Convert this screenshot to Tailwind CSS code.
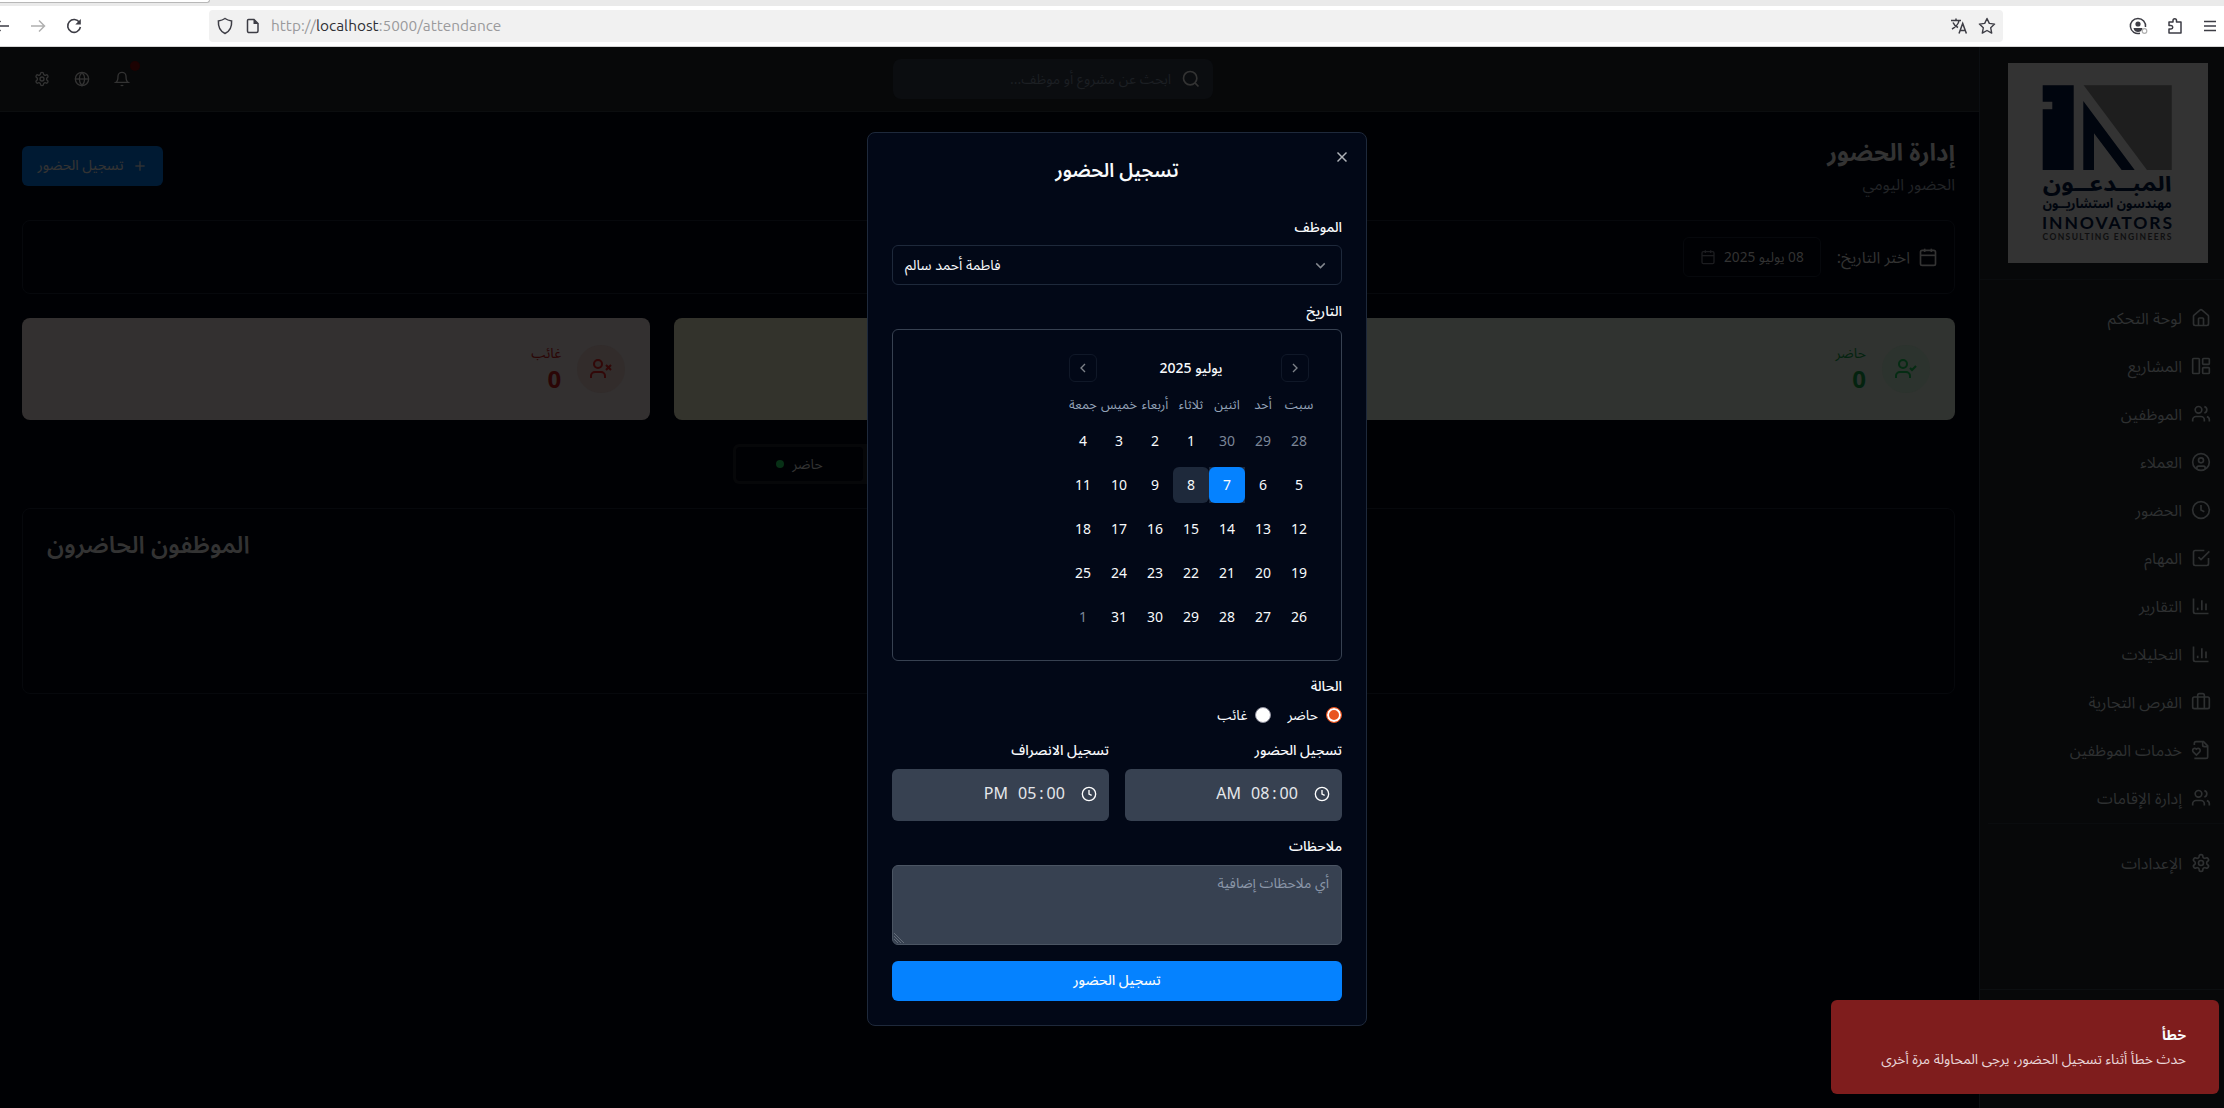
<!DOCTYPE html>
<html lang="ar">
<head>
<meta charset="utf-8">
<title>Attendance</title>
<script src="https://cdn.jsdelivr.net/npm/@tailwindcss/browser@4"></script>
</head>
<body class="h-[1108px] w-[2224px] overflow-hidden bg-[#000104] font-['Noto_Sans','Noto_Sans_Arabic','DejaVu_Sans',sans-serif]">
<svg class="hidden">
  <defs>
    <symbol id="home" viewBox="0 0 24 24"><path d="M15 21v-8a1 1 0 0 0-1-1h-4a1 1 0 0 0-1 1v8"/><path d="M3 10a2 2 0 0 1 .709-1.528l7-5.999a2 2 0 0 1 2.582 0l7 5.999A2 2 0 0 1 21 10v9a2 2 0 0 1-2 2H5a2 2 0 0 1-2-2z"/></symbol>
    <symbol id="board" viewBox="0 0 24 24"><rect x="2" y="3" width="8" height="18" rx="1"/><rect x="14" y="3" width="8" height="7" rx="1"/><rect x="14" y="14" width="8" height="7" rx="1"/></symbol>
    <symbol id="users" viewBox="0 0 24 24"><path d="M16 21v-2a4 4 0 0 0-4-4H6a4 4 0 0 0-4 4v2"/><circle cx="9" cy="7" r="4"/><path d="M22 21v-2a4 4 0 0 0-3-3.87"/><path d="M16 3.13a4 4 0 0 1 0 7.75"/></symbol>
    <symbol id="usercircle" viewBox="0 0 24 24"><circle cx="12" cy="12" r="10"/><circle cx="12" cy="10" r="3"/><path d="M7 20.7V19a2 2 0 0 1 2-2h6a2 2 0 0 1 2 2v1.7"/></symbol>
    <symbol id="clock" viewBox="0 0 24 24"><circle cx="12" cy="12" r="10"/><path d="M12 6v6l4 2"/></symbol>
    <symbol id="check" viewBox="0 0 24 24"><path d="m9 11 3 3L22 4"/><path d="M21 12v7a2 2 0 0 1-2 2H5a2 2 0 0 1-2-2V5a2 2 0 0 1 2-2h11"/></symbol>
    <symbol id="chart" viewBox="0 0 24 24"><path d="M3 3v16a2 2 0 0 0 2 2h16"/><path d="M18 17V9"/><path d="M13 17V5"/><path d="M8 17v-3"/></symbol>
    <symbol id="case" viewBox="0 0 24 24"><path d="M16 20V4a2 2 0 0 0-2-2h-4a2 2 0 0 0-2 2v16"/><rect x="2" y="6" width="20" height="14" rx="2"/></symbol>
    <symbol id="heart" viewBox="0 0 24 24"><path d="M4 22h14a2 2 0 0 0 2-2V7l-5-5H6a2 2 0 0 0-2 2v2"/><path d="M14 2v4a2 2 0 0 0 2 2h4"/><path d="M10.29 10.7a2.43 2.43 0 0 0-2.66-.52c-.29.12-.56.3-.78.53l-.35.34-.35-.34a2.43 2.43 0 0 0-2.65-.53c-.3.12-.56.3-.79.53-.95.94-1 2.53.2 3.74L6.5 18l3.6-3.55c1.2-1.21 1.14-2.8.19-3.74Z"/></symbol>
    <symbol id="gear" viewBox="0 0 24 24"><path d="M12.22 2h-.44a2 2 0 0 0-2 2v.18a2 2 0 0 1-1 1.73l-.43.25a2 2 0 0 1-2 0l-.15-.08a2 2 0 0 0-2.73.73l-.22.38a2 2 0 0 0 .73 2.73l.15.1a2 2 0 0 1 1 1.72v.51a2 2 0 0 1-1 1.74l-.15.09a2 2 0 0 0-.73 2.73l.22.38a2 2 0 0 0 2.73.73l.15-.08a2 2 0 0 1 2 0l.43.25a2 2 0 0 1 1 1.73V20a2 2 0 0 0 2 2h.44a2 2 0 0 0 2-2v-.18a2 2 0 0 1 1-1.73l.43-.25a2 2 0 0 1 2 0l.15.08a2 2 0 0 0 2.73-.73l.22-.39a2 2 0 0 0-.73-2.73l-.15-.08a2 2 0 0 1-1-1.74v-.5a2 2 0 0 1 1-1.74l.15-.09a2 2 0 0 0 .73-2.73l-.22-.38a2 2 0 0 0-2.73-.73l-.15.08a2 2 0 0 1-2 0l-.43-.25a2 2 0 0 1-1-1.73V4a2 2 0 0 0-2-2z"/><circle cx="12" cy="12" r="3"/></symbol>
    <symbol id="globe" viewBox="0 0 24 24"><circle cx="12" cy="12" r="10"/><path d="M12 2a14.5 14.5 0 0 0 0 20 14.5 14.5 0 0 0 0-20"/><path d="M2 12h20"/></symbol>
    <symbol id="bell" viewBox="0 0 24 24"><path d="M6 8a6 6 0 0 1 12 0c0 7 3 9 3 9H3s3-2 3-9"/><path d="M10.3 21a1.94 1.94 0 0 0 3.4 0"/></symbol>
    <symbol id="search" viewBox="0 0 24 24"><circle cx="11" cy="11" r="8"/><path d="m21 21-4.3-4.3"/></symbol>
    <symbol id="calendar" viewBox="0 0 24 24"><path d="M8 2v4"/><path d="M16 2v4"/><rect x="3" y="4" width="18" height="18" rx="2"/><path d="M3 10h18"/></symbol>
    <symbol id="plus" viewBox="0 0 24 24"><path d="M5 12h14"/><path d="M12 5v14"/></symbol>
    <symbol id="usercheck" viewBox="0 0 24 24"><path d="M16 21v-2a4 4 0 0 0-4-4H6a4 4 0 0 0-4 4v2"/><circle cx="9" cy="7" r="4"/><path d="m16 11 2 2 4-4"/></symbol>
    <symbol id="userx" viewBox="0 0 24 24"><path d="M16 21v-2a4 4 0 0 0-4-4H6a4 4 0 0 0-4 4v2"/><circle cx="9" cy="7" r="4"/><path d="m17 8 5 5"/><path d="m22 8-5 5"/></symbol>
    <symbol id="x" viewBox="0 0 24 24"><path d="M18 6 6 18"/><path d="m6 6 12 12"/></symbol>
    <symbol id="down" viewBox="0 0 24 24"><path d="m6 9 6 6 6-6"/></symbol>
    <symbol id="left" viewBox="0 0 24 24"><path d="m15 18-6-6 6-6"/></symbol>
    <symbol id="right" viewBox="0 0 24 24"><path d="m9 18 6-6-6-6"/></symbol>
  </defs>
</svg>

<div class="flex h-full flex-col">
  <!-- Browser chrome -->
  <div class="h-[47px] shrink-0" dir="ltr">
    <div class="h-[6px] bg-[#eaeaea]"><div class="h-[3px] w-[210px] rounded-br border-r border-b border-[#b8b8b8] bg-white"></div></div>
    <div class="flex h-[41px] items-center border-b border-[#d6d6d6] bg-white text-[#3d3d45]">
      <svg class="-ml-[9px] size-5" viewBox="0 0 20 20" fill="none" stroke="currentColor" stroke-width="1.5"><path d="M18 10H4M9.500 5 4.500 10l5 5"/></svg>
      <svg class="ml-[17px] size-5 text-[#b0b0b0]" viewBox="0 0 20 20" fill="none" stroke="currentColor" stroke-width="1.500"><path d="M3 10h13M11 4.500l5.500 5.500-5.500 5.500"/></svg>
      <svg class="ml-[16px] size-5" viewBox="0 0 20 20" fill="none" stroke="currentColor" stroke-width="1.600"><path d="M15.500 6.500A6.400 6.400 0 1 0 16.400 11"/><path d="M16.800 3v5.500h-5.500z" fill="currentColor" stroke="none"/></svg>
      <div class="ml-[125px] flex h-8 w-[1794px] items-center rounded bg-[#f1f1f1]">
        <svg class="ml-[6px] size-5" viewBox="0 0 20 20" fill="none" stroke="currentColor" stroke-width="1.500"><path d="M10 2.500c2 1.400 4 2 6.600 2.400C17 11.500 14.500 15.500 10 17.500 5.500 15.500 3 11.500 3.400 4.900 6 4.500 8 3.900 10 2.500z"/></svg>
        <svg class="ml-[8px] size-5" viewBox="0 0 20 20" fill="none" stroke="currentColor" stroke-width="1.500"><path d="M5.500 3.500h5.500l4 4V15a1.500 1.500 0 0 1-1.500 1.500h-7A1.500 1.500 0 0 1 4.500 15V4.500a1 1 0 0 1 1-1z"/><path d="M10.500 3v5h5z" fill="currentColor" stroke="none"/></svg>
        <span class="ml-[8px] font-['Ubuntu','Noto_Sans'] text-[15.400px] whitespace-nowrap text-[#9a9a9c]">http://<span class="text-[#2f2f35]">localhost</span>:5000/attendance</span>
        <svg class="mr-[9px] ml-auto size-[18px]" viewBox="0 0 18 18" fill="none" stroke="currentColor" stroke-width="1.500"><path d="M1 3.500h10M6 1.500v2M9 3.500C8.500 7.500 5.500 10 2 12M3 5.500C4 8 6 9.500 8 10.500M9 16.500l3.700-10 3.700 10M10.200 13.500h5"/></svg>
        <svg class="mr-[6px] size-5" viewBox="0 0 20 20" fill="none" stroke="currentColor" stroke-width="1.400" stroke-linejoin="round"><path d="m10 2.500 2.300 4.900 5.300.7-3.900 3.700 1 5.300-4.700-2.600-4.700 2.600 1-5.300L2.400 8.100l5.300-.7z"/></svg>
      </div>
      <svg class="ml-[125px] size-5" viewBox="0 0 20 20" fill="none" stroke="currentColor" stroke-width="1.500"><path d="M17.500 11A7.600 7.600 0 1 0 12 17.300"/><circle cx="10" cy="8" r="2.600" fill="currentColor" stroke="none"/><path d="M5.500 12h9c-.5 3-2.500 4-4.500 4s-4-1-4.500-4z" fill="currentColor" stroke="none"/><circle cx="16.500" cy="15" r="2.300" stroke="#b0b0b0" stroke-width="1.200"/></svg>
      <svg class="ml-[17px] size-5" viewBox="0 0 20 20" fill="none" stroke="currentColor" stroke-width="1.500" stroke-linejoin="round"><path d="M4 8V6h4V4.500a1.700 1.700 0 0 1 3.500 0V6H16v11H4v-4h2a1.700 1.700 0 0 0 0-3.500H4z"/></svg>
      <svg class="ml-[15px] size-5" viewBox="0 0 20 20" fill="none" stroke="currentColor" stroke-width="1.500"><path d="M4 5.500h12M4 10h12M4 14.500h12"/></svg>
    </div>
  </div>

  <div class="flex min-h-0 flex-1" dir="rtl">
    <!-- Sidebar -->
    <aside class="flex w-[245px] shrink-0 flex-col border-l border-[#0c0f12] bg-[#070809] text-[#2e3031]">
      <div class="h-[233px] shrink-0 border-b border-[#0a0c0e] pt-4 pr-4">
        <svg class="size-[200px] bg-[#333333]" viewBox="0 0 200 200">
          <path fill="#00050e" d="M34.700 22.300h31V107h-31V46.300h9.600v-7.600h-9.600zM75.300 38l51.400 69h-13L86 70.300V107H75.300z"/>
          <path fill="#1e1e1e" d="M75.700 22.300h88V107H139z"/>
          <g fill="#00050e" font-family="Noto Sans, Noto Sans Arabic, DejaVu Sans, sans-serif" font-weight="700" text-anchor="middle">
            <text x="99.200" y="128" font-size="21" textLength="129" lengthAdjust="spacingAndGlyphs">المبــدعــون</text>
            <text x="99.200" y="145" font-size="13" textLength="129" lengthAdjust="spacingAndGlyphs">مهندسون استشاريــون</text>
          </g>
          <g fill="#00050e" font-family="Lato, Open Sans" font-weight="700" direction="ltr">
            <text x="34" y="165.500" font-size="17.500" textLength="130" lengthAdjust="spacing">INNOVATORS</text>
            <text x="34.500" y="176.700" font-size="8.500" fill="#0f0f10" textLength="129" lengthAdjust="spacing">CONSULTING ENGINEERS</text>
          </g>
        </svg>
      </div>
      <nav id="nav" class="flex flex-col pt-[14px] text-base"></nav>
      <div class="mt-[1px] mr-0 ml-2 h-px bg-[#0a0c0e]"></div>
      <div class="mt-[15px] flex h-12 shrink-0 items-center gap-[9px] pr-[13px]"><svg class="size-5 fill-none stroke-current stroke-2"><use href="#gear"/></svg><span>الإعدادات</span></div>
      <div class="mt-[102px] h-px bg-[#0c0f11]"></div>
    </aside>

    <div class="flex min-w-0 flex-1 flex-col">
      <header class="flex h-[65px] shrink-0 items-center border-b border-[#0b0d0f] bg-[#070809] text-[#333333]">
        <div class="mr-[766px] flex h-10 w-[320px] items-center gap-[10px] rounded-lg bg-[#0b0d10] pr-[12px] text-sm text-[#1c1f23]"><svg class="size-5 fill-none stroke-[#333333] stroke-2"><use href="#search"/></svg>ابحث عن مشروع أو موظف...</div>
        <div class="mr-auto ml-[34px] flex gap-6" dir="ltr">
          <svg class="size-4 fill-none stroke-current stroke-2"><use href="#gear"/></svg>
          <svg class="size-4 fill-none stroke-current stroke-2"><use href="#globe"/></svg>
          <div class="relative"><svg class="size-4 fill-none stroke-current stroke-2"><use href="#bell"/></svg><span class="absolute -top-[10px] left-4 size-[10px] rounded-full bg-[#1c0202]"></span></div>
        </div>
      </header>

      <main class="flex flex-1 flex-col pt-[22px] pr-6 pl-[22px] text-[#333333]">
        <div class="flex h-[63px] items-center justify-between">
          <div><h1 class="text-2xl leading-8 font-bold">إدارة الحضور</h1><p class="mt-1 text-base leading-6 text-[#222427]">الحضور اليومي</p></div>
          <div class="flex h-10 w-[141px] items-center justify-center gap-2 rounded-md bg-[#001a33] text-[13.800px] font-medium"><svg class="size-4 fill-none stroke-current stroke-2"><use href="#plus"/></svg><span>تسجيل الحضور</span></div>
        </div>
        <div class="mt-[23px] flex h-[74px] items-center rounded-lg border border-[#06080c] pr-4">
          <svg class="size-5 fill-none stroke-current stroke-2"><use href="#calendar"/></svg>
          <span class="mr-2 text-base">اختر التاريخ:</span>
          <div class="mr-4 flex h-10 w-[138px] items-center justify-center gap-2 rounded-md border border-[#06080c] text-[13.700px]"><span>08 يوليو 2025</span><svg class="size-4 fill-none stroke-[#1c1d20] stroke-2"><use href="#calendar"/></svg></div>
        </div>
        <div class="mt-6 grid h-[102px] grid-cols-3 gap-6">
          <div class="flex items-center gap-4 rounded-lg bg-[#303330] pr-[25px] text-[#04230f]">
            <div class="flex size-12 items-center justify-center rounded-full bg-[#2c332e]"><svg class="size-6 fill-none stroke-[#052c13] stroke-2"><use href="#usercheck"/></svg></div>
            <div><p class="text-sm leading-5">حاضر</p><p class="text-2xl leading-8 font-bold">0</p></div>
          </div>
          <div class="rounded-lg bg-[#33332c]"></div>
          <div class="flex items-center gap-4 rounded-lg bg-[#333030] pr-[25px] text-[#2b0606]">
            <div class="flex size-12 items-center justify-center rounded-full bg-[#322c2b]"><svg class="size-6 fill-none stroke-[#320808] stroke-2"><use href="#userx"/></svg></div>
            <div><p class="text-sm leading-5">غائب</p><p class="text-2xl leading-8 font-bold">0</p></div>
          </div>
        </div>
        <div class="mx-auto mt-6 flex h-10 w-[511px] justify-end rounded-md bg-[#060709] p-[3px]">
          <div class="flex w-[127px] items-center justify-center gap-2 rounded bg-[#000104] text-sm">حاضر<span class="size-2 rounded-full bg-[#073016]"></span></div>
        </div>
        <div class="mt-6 h-[186px] rounded-lg border border-[#06080c] pt-[19px] pl-6 text-left text-2xl leading-8 font-semibold tracking-[-0.035em]">الموظفون الحاضرون</div>
      </main>
    </div>
  </div>
</div>

<!-- Check-in dialog -->
<div class="absolute top-[132px] left-[867px] flex h-[894px] w-[500px] flex-col rounded-lg border border-[#1e293b] bg-[#020817] px-6 pt-[23px] text-sm text-[#f8fafc]" dir="rtl">
  <svg class="absolute top-[15px] right-[15px] size-[18px] fill-none stroke-[#b0b3b9] stroke-2"><use href="#x"/></svg>
  <h2 class="h-[28px] text-center text-[19.200px] leading-7 font-semibold tracking-tight">تسجيل الحضور</h2>
  <label class="mt-[33px] h-5 leading-5 font-medium">الموظف</label>
  <div class="mt-[8px] flex h-10 items-center justify-between rounded-md border border-[#1e293b] px-3"><svg class="size-[17px] fill-none stroke-[#84888f] stroke-2"><use href="#down"/></svg><span>فاطمة أحمد سالم</span></div>
  <label class="mt-[16px] h-5 leading-5 font-medium">التاريخ</label>
  <div class="mt-[8px] h-[332px] rounded-md border border-[#374151] p-6">
    <div class="flex w-[252px] flex-col">
      <div class="flex h-7 items-center justify-between pr-2 pl-1 font-medium">
        <span class="flex size-7 items-center justify-center rounded-md border border-[#101828]"><svg class="size-4 fill-none stroke-[#7d8289] stroke-2"><use href="#right"/></svg></span>
        <span class="-mr-[4px]">يوليو 2025</span>
        <span class="flex size-7 items-center justify-center rounded-md border border-[#101828]"><svg class="size-4 fill-none stroke-[#7d8289] stroke-2"><use href="#left"/></svg></span>
      </div>
      <div class="mt-[12px] grid grid-cols-7 text-center text-[12.800px] leading-5 whitespace-nowrap text-[#94a3b8]"><span>سبت</span><span>أحد</span><span>اثنين</span><span>ثلاثاء</span><span>أربعاء</span><span>خميس</span><span>جمعة</span></div>
      <div id="days" class="mt-[9px] grid grid-cols-7 gap-y-2"></div>
    </div>
  </div>
  <label class="mt-[15px] h-5 leading-5 font-medium">الحالة</label>
  <div class="mt-[9px] flex h-5 items-center">
    <span class="size-4 rounded-full border border-[#e95420] bg-[#e95420] shadow-[inset_0_0_0_2px_white]"></span><span class="mr-2 -mt-px">حاضر</span>
    <span class="mr-4 size-4 rounded-full border border-[#8f8f9d] bg-white"></span><span class="mr-2 -mt-px">غائب</span>
  </div>
  <div class="mt-[15px] grid grid-cols-2 gap-4">
    <div><p class="leading-5 font-medium">تسجيل الحضور</p>
      <div class="mt-[9px] flex h-[52px] items-center justify-end rounded-md bg-[#374151] pr-3 pb-1 text-base text-[#e5e7eb]" dir="ltr"><span class="mr-[10px]">AM</span><span class="w-[46px] whitespace-nowrap">08<span class="mx-[3px]">:</span>00</span><svg class="ml-[17px] mt-[2px] size-4 fill-none stroke-white stroke-2"><use href="#clock"/></svg></div></div>
    <div><p class="leading-5 font-medium">تسجيل الانصراف</p>
      <div class="mt-[9px] flex h-[52px] items-center justify-end rounded-md bg-[#374151] pr-3 pb-1 text-base text-[#e5e7eb]" dir="ltr"><span class="mr-[10px]">PM</span><span class="w-[46px] whitespace-nowrap">05<span class="mx-[3px]">:</span>00</span><svg class="ml-[17px] mt-[2px] size-4 fill-none stroke-white stroke-2"><use href="#clock"/></svg></div></div>
  </div>
  <label class="mt-[15px] h-5 leading-5 font-medium">ملاحظات</label>
  <div class="relative mt-[9px] h-20 rounded-md border border-[#4b5563] bg-[#374151] px-3 py-[7px] leading-5 text-[#8b97a9]">أي ملاحظات إضافية
    <svg class="absolute bottom-px left-px size-[11px] stroke-[#6f7784]" viewBox="0 0 11 11" stroke-width=".8"><path d="M0 1l10 10M0 4l7 7M0 7l4 4"/></svg></div>
  <div class="mt-4 flex h-10 items-center justify-center rounded-md bg-[#0582ff] pb-0.5 font-medium">تسجيل الحضور</div>
</div>

<!-- Error toast -->
<div class="absolute top-[1000px] left-[1831px] h-[94px] w-[388px] rounded-md bg-[#7f1d1d] pt-[25px] pr-[33px] text-sm text-[#f8fafc]" dir="rtl">
  <p class="leading-5 font-bold">خطأ</p>
  <p class="mt-1 text-[13.900px] leading-5 whitespace-nowrap text-[#e9d6d8]">حدث خطأ أثناء تسجيل الحضور، يرجى المحاولة مرة أخرى</p>
</div>

<script>
  const items = [['home','لوحة التحكم'],['board','المشاريع'],['users','الموظفين'],['usercircle','العملاء'],['clock','الحضور'],['check','المهام'],['chart','التقارير'],['chart','التحليلات'],['case','الفرص التجارية'],['heart','خدمات الموظفين'],['users','إدارة الإقامات']];
  document.getElementById('nav').innerHTML = items.map(([icon, label]) =>
    `<a class="flex h-12 items-center gap-[9px] pr-[13px]"><svg class="size-5 fill-none stroke-current stroke-2"><use href="#${icon}"/></svg><span>${label}</span></a>`).join('');
  let html = '';
  for (let i = 0; i < 35; i++) {
    const n = i < 3 ? 28 + i : i === 34 ? 1 : i - 2;
    const outside = i < 3 || i === 34;
    if (i === 9) html += '<span class="bg-[#1e293b]"><span class="flex h-9 items-center justify-center rounded-md bg-[#0582ff]">7</span></span>';
    else if (i === 10) html += '<span class="flex h-9 items-center justify-center rounded-md bg-[#1e293b]">8</span>';
    else html += outside ? `<span class="flex h-9 items-center justify-center text-[#7b8698]">${n}</span>` : `<span class="flex h-9 items-center justify-center">${n}</span>`;
  }
  document.getElementById('days').innerHTML = html;
</script>
</body>
</html>
